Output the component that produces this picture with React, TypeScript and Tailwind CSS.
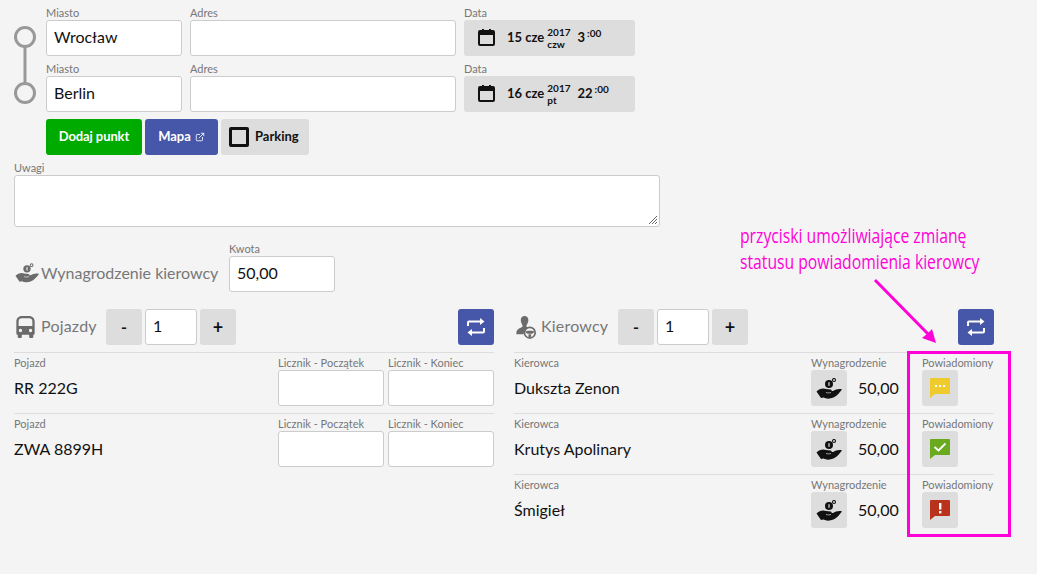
import { ExternalLink } from "lucide-react";

function Label({ children }: { children: React.ReactNode }) {
  return <div className="h-[13px] text-[11px] leading-[11px] text-[#777]">{children}</div>;
}

function Field({ value = "", className = "" }: { value?: string; className?: string }) {
  return (
    <div className={"h-9 bg-white border border-[#ccc] rounded-[3px] pl-[7px] text-[16px] leading-[32px] text-[#111] " + className}>
      {value}
    </div>
  );
}

function CalendarIcon() {
  return (
    <svg width="17" height="18" viewBox="0 0 17 18" className="shrink-0 mt-[-2px]">
      <rect x="1" y="3" width="15" height="14" rx="1" fill="none" stroke="#111" strokeWidth="2" />
      <rect x="1" y="3" width="15" height="4" fill="#111" />
      <rect x="4" y="1" width="2" height="4" fill="#111" />
      <rect x="11" y="1" width="2" height="4" fill="#111" />
    </svg>
  );
}

function DateBox({ day, year, week, hour }: { day: string; year: string; week: string; hour: string }) {
  return (
    <div className="w-[171px] h-9 bg-[#ddd] rounded-[3px] flex items-center pl-[14px] font-bold text-[#111]">
      <CalendarIcon />
      <span className="ml-[12px] text-[13px]">{day}</span>
      <span className="ml-[3px] flex flex-col text-[10px] leading-[12px] mt-[-1px]">
        <span>{year}</span>
        <span>{week}</span>
      </span>
      <span className="ml-[7px] text-[13px]">{hour}</span>
      <span className="ml-[2px] text-[10px] mt-[-10px]">:00</span>
    </div>
  );
}

function RouteGraphic() {
  return (
    <svg width="32" height="92" viewBox="0 0 32 92" className="shrink-0 mt-[13px]">
      <rect x="9.5" y="20" width="3" height="50" fill="#999" />
      <circle cx="11" cy="17" r="9.5" fill="#f4f4f4" stroke="#999" strokeWidth="3" />
      <circle cx="11" cy="73" r="9.5" fill="#f4f4f4" stroke="#999" strokeWidth="3" />
    </svg>
  );
}

function RoutePoint({ city, date }: { city: string; date: React.ReactNode }) {
  return (
    <div className="flex gap-2">
      <div className="w-[136px]">
        <Label>Miasto</Label>
        <Field value={city} />
      </div>
      <div className="w-[266px]">
        <Label>Adres</Label>
        <Field />
      </div>
      <div>
        <Label>Data</Label>
        {date}
      </div>
    </div>
  );
}

function HandCoins({ color = "#111", crease = "#ddd", width = 26, height = 21 }: { color?: string; crease?: string; width?: number; height?: number }) {
  return (
    <svg width={width} height={height} viewBox="0 0 26 21">
      <circle cx="13" cy="6" r="4" fill={color} />
      <rect x="12.4" y="4.2" width="1.2" height="3.6" fill={crease} />
      <circle cx="18" cy="2" r="1.5" fill="none" stroke={color} strokeWidth="1.1" />
      <path d="M0.5 13.5 C3 11 7 9.5 10 11 L14.5 11.5 C15.5 11.5 16 12.5 15.5 13 L17 13 C19.5 11.5 23 10.5 26 11.5 C24 14 21 18 17.5 19.5 C14 21 10 21 7.5 19.5 L5 20 Z" fill={color} />
      <path d="M10 14.5 C11.5 15 13.5 15 15 14.5" fill="none" stroke={crease} strokeWidth="0.7" />
    </svg>
  );
}

function RepeatIcon() {
  return (
    <svg width="20" height="20" viewBox="0 0 20 20" fill="none" stroke="#fff" strokeWidth="2">
      <path d="M2 9 V5.5 C2 4.8 2.5 4.5 3 4.5 H16" />
      <path d="M18 11 V14.5 C18 15.2 17.5 15.5 17 15.5 H4" />
      <path d="M14 1 L18.5 4.5 L14 8 Z" fill="#fff" stroke="none" />
      <path d="M6 12 L1.5 15.5 L6 19 Z" fill="#fff" stroke="none" />
    </svg>
  );
}

function BusIcon() {
  return (
    <svg width="19" height="22" viewBox="0 0 20 24">
      <path fillRule="evenodd" fill="#6b6b6b" d="M6 0 H14 C17.5 0 20 2.5 20 6 V19 C20 20 19.5 20.5 18.5 20.5 V22.5 C18.5 23.5 18 24 17 24 H15.5 C14.5 24 14 23.5 14 22.5 V20.5 H6 V22.5 C6 23.5 5.5 24 4.5 24 H3 C2 24 1.5 23.5 1.5 22.5 V20.5 C0.5 20.5 0 20 0 19 V6 C0 2.5 2.5 0 6 0 Z M6 2.5 C3.8 2.5 2.5 3.8 2.5 6 V11 H17.5 V6 C17.5 3.8 16.2 2.5 14 2.5 Z M4.5 14 A1.8 1.8 0 1 0 4.5 17.6 A1.8 1.8 0 1 0 4.5 14 Z M15.5 14 A1.8 1.8 0 1 0 15.5 17.6 A1.8 1.8 0 1 0 15.5 14 Z" />
    </svg>
  );
}

function DriverIcon() {
  return (
    <svg width="20" height="23" viewBox="0 0 21 24">
      <path fill="#6b6b6b" d="M9 0 C11.5 0 13 2 13 4.5 C13 7 11.5 8.5 11 10 C10.8 11 11.5 12 12.5 12.5 C9.5 13.5 8 16 8 19 H0.5 C0 15.5 2 13 5.5 12 C6.5 11.5 7 11 6.8 10 C6.5 8.5 5 7 5 4.5 C5 2 6.5 0 9 0 Z" />
      <circle cx="14.5" cy="17.5" r="5.6" fill="none" stroke="#6b6b6b" strokeWidth="1.8" />
      <path fill="#6b6b6b" d="M9.5 16.5 C11.5 15 17.5 15 19.5 16.5 L17 18.5 H12 Z M13.2 19 H15.8 L16 22.5 H13 Z" />
    </svg>
  );
}

function Bubble({ color, children }: { color: string; children: React.ReactNode }) {
  return (
    <svg width="20" height="20" viewBox="0 0 20 20">
      <path fill={color} d="M1 0 H19 C19.6 0 20 0.4 20 1 V15 C20 15.6 19.6 16 19 16 H5 L0 20 V1 C0 0.4 0.4 0 1 0 Z" />
      {children}
    </svg>
  );
}

function NotifyDots() {
  return (
    <Bubble color="#f0cb2d">
      <rect x="5" y="7" width="2" height="2" fill="#fff" />
      <rect x="9" y="7" width="2" height="2" fill="#fff" />
      <rect x="13" y="7" width="2" height="2" fill="#fff" />
    </Bubble>
  );
}

function NotifyCheck() {
  return (
    <Bubble color="#6aaa1e">
      <path d="M4.5 8 L8.5 11.5 L15.5 4.5" fill="none" stroke="#fff" strokeWidth="1.8" />
    </Bubble>
  );
}

function NotifyAlert() {
  return (
    <Bubble color="#b9331c">
      <rect x="9" y="3" width="2.4" height="6.5" fill="#fff" />
      <rect x="9" y="11" width="2.4" height="2.4" fill="#fff" />
    </Bubble>
  );
}

function SectionHeader({ icon, title, gap, titleWidth }: { icon: React.ReactNode; title: string; gap: string; titleWidth: string }) {
  return (
    <div className="h-9 flex items-center">
      <div className={"flex items-center text-[16px] text-[#777] tracking-[0.2px] " + titleWidth}>
        {icon}
        <span className={gap + " mb-[2px]"}>{title}</span>
      </div>
      <button className="w-9 h-9 bg-[#ddd] rounded-[3px] font-bold text-[#111] text-[16px]">-</button>
      <Field value="1" className="w-[52px] ml-[3px]" />
      <button className="w-9 h-9 ml-[3px] bg-[#ddd] rounded-[3px] font-bold text-[#111] text-[18px]">+</button>
      <button className="w-9 h-9 ml-auto bg-[#4657a9] rounded-[3px] flex items-center justify-center">
        <RepeatIcon />
      </button>
    </div>
  );
}

function VehicleRow({ name }: { name: string }) {
  return (
    <div className="h-[61px] border-t border-[#ddd] pt-[4px] flex">
      <div className="flex-1">
        <Label>Pojazd</Label>
        <div className="h-9 leading-9 text-[16px] text-[#111]">{name}</div>
      </div>
      <div className="w-[106px]">
        <Label>Licznik - Początek</Label>
        <Field />
      </div>
      <div className="w-[106px] ml-1">
        <Label>Licznik - Koniec</Label>
        <Field />
      </div>
    </div>
  );
}

function DriverRow({ name, status }: { name: string; status: React.ReactNode }) {
  return (
    <div className="h-[61px] border-t border-[#ddd] pt-[4px] flex">
      <div className="flex-1">
        <Label>Kierowca</Label>
        <div className="h-9 leading-9 text-[16px] text-[#111]">{name}</div>
      </div>
      <div className="w-[111px]">
        <Label>Wynagrodzenie</Label>
        <div className="flex items-center h-9">
          <div className="w-9 h-9 bg-[#ddd] rounded-[3px] flex items-center justify-center">
            <HandCoins />
          </div>
          <span className="ml-[11px] text-[16px] text-[#111]">50,00</span>
        </div>
      </div>
      <div className="w-[72px]">
        <Label>Powiadomiony</Label>
        <div className="w-9 h-9 bg-[#ddd] rounded-[3px] flex items-center justify-center">{status}</div>
      </div>
    </div>
  );
}

export default function App() {
  return (
    <div className="relative w-[1037px] h-[574px] overflow-hidden bg-[#f4f4f4] px-[14px] pt-[7px] font-['Lato',sans-serif]">
      <div className="flex">
        <RouteGraphic />
        <div className="flex flex-col gap-[7px]">
          <RoutePoint city="Wrocław" date={<DateBox day="15 cze" year="2017" week="czw" hour="3" />} />
          <RoutePoint city="Berlin" date={<DateBox day="16 cze" year="2017" week="pt" hour="22" />} />
          <div className="flex gap-[3px] text-[13px] font-bold">
            <button className="w-[96px] h-9 bg-[#00ab00] rounded-[3px] text-white tracking-[-0.1px]">Dodaj punkt</button>
            <button className="w-[73px] h-9 bg-[#4657a9] rounded-[3px] text-white flex items-center justify-center gap-[4px]">
              Mapa <ExternalLink size={10} strokeWidth={2} />
            </button>
            <button className="w-[88px] h-9 bg-[#ddd] rounded-[3px] text-[#111] flex items-center pl-2 gap-[6px]">
              <span className="w-5 h-5 border-[3px] border-[#111] rounded-[2px]" />
              Parking
            </button>
          </div>
        </div>
      </div>

      <div className="mt-[7px] w-[646px]">
        <Label>Uwagi</Label>
        <div className="relative h-[52px] bg-white border border-[#ccc] rounded-[3px]">
          <svg width="10" height="10" viewBox="0 0 10 10" className="absolute right-[1px] bottom-[1px]" stroke="#666" strokeWidth="1">
            <path d="M9 1 L1 9 M9 4 L4 9 M9 7 L7 9" />
          </svg>
        </div>
      </div>

      <div className="mt-[16px] flex items-end">
        <div className="h-9 w-[215px] flex items-center text-[16px] text-[#777]">
          <span className="ml-[1px] mb-[2px] flex">
            <HandCoins color="#6b6b6b" crease="#f4f4f4" width={24} height={20} />
          </span>
          <span className="ml-[2px] mb-[2px]">Wynagrodzenie kierowcy</span>
        </div>
        <div className="w-[106px]">
          <Label>Kwota</Label>
          <Field value="50,00" />
        </div>
      </div>

      <div className="mt-[17px] flex gap-5">
        <div className="w-[480px]">
          <SectionHeader icon={<BusIcon />} title="Pojazdy" gap="ml-[6px]" titleWidth="w-[92px] pl-[2px]" />
          <div className="mt-[7px]">
            <VehicleRow name="RR 222G" />
            <VehicleRow name="ZWA 8899H" />
          </div>
        </div>
        <div className="w-[480px]">
          <SectionHeader icon={<DriverIcon />} title="Kierowcy" gap="ml-[5px]" titleWidth="w-[104px] pl-[2px]" />
          <div className="mt-[7px]">
            <DriverRow name="Dukszta Zenon" status={<NotifyDots />} />
            <DriverRow name="Krutys Apolinary" status={<NotifyCheck />} />
            <DriverRow name="Śmigieł" status={<NotifyAlert />} />
          </div>
        </div>
      </div>

      {/* adnotacja */}
      <div className="absolute left-[740px] top-[223px] text-[#ff00d8] text-[20px] leading-[26px] whitespace-nowrap origin-left scale-x-[0.785] font-['Open_Sans',sans-serif]">
        <div>przyciski umożliwiające zmianę</div>
        <div>statusu powiadomienia kierowcy</div>
      </div>
      <svg width="70" height="70" viewBox="0 0 70 70" className="absolute left-[870px] top-[275px]">
        <path d="M5 5 L60 61" stroke="#ff00d8" strokeWidth="3" />
        <path d="M66 68 L52 63 L57 59 L62 54 Z" fill="#ff00d8" />
      </svg>
      <div className="absolute left-[907px] top-[351px] w-[104px] h-[186px] border-[3px] border-[#ff00d8]" />
    </div>
  );
}
